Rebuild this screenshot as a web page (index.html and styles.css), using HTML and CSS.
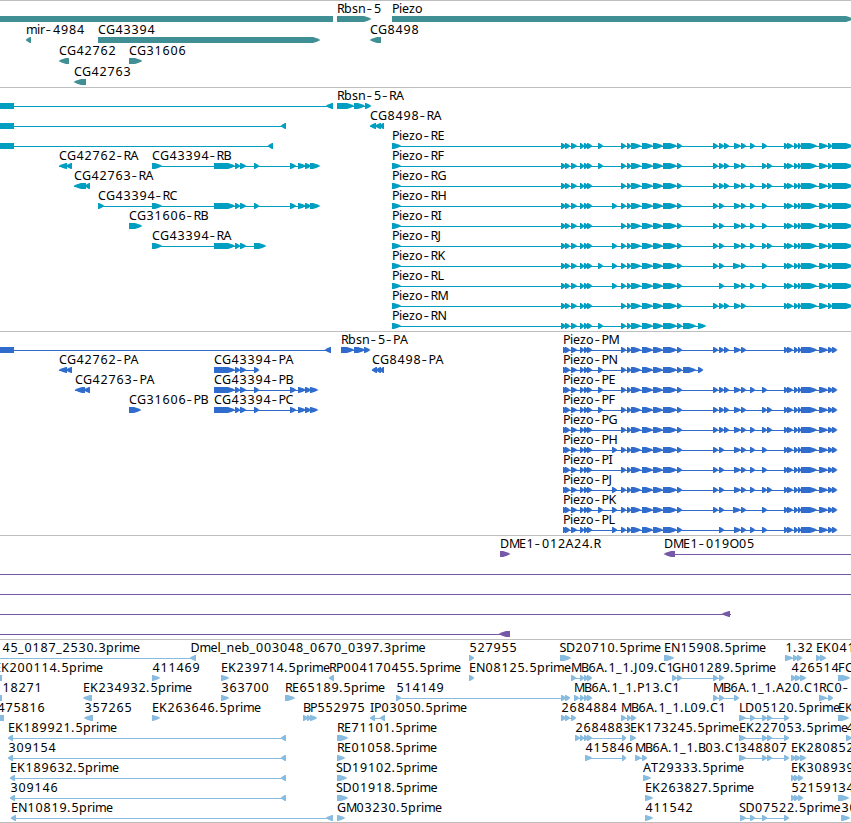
FILE: index.html
```
<!DOCTYPE html>
<html lang="en">
<head>
    <meta charset="UTF-8">
    <meta name="viewport" content="width=device-width, initial-scale=1.0">
    <title>Genome tracks</title>
    <link rel="stylesheet" href="styles.css">
</head>
<body>

    <main class="browser">
        <section class="track track-genes"><svg id="genes"></svg></section>
        <section class="track track-transcripts"><svg id="transcripts"></svg></section>
        <section class="track track-proteins"><svg id="proteins"></svg></section>
        <section class="track track-clones"><svg id="clones"></svg></section>
        <section class="track track-ests"><svg id="ests"></svg></section>
    </main>

    <script src="script.js"></script>
</body>
</html>
```

FILE: styles.css
```
/* Track color scheme */
:root {
    --gene-color: #3f8f94;
    --transcript-color: #009fc1;
    --protein-color: #306ccc;
    --clone-color: #7658a8;
    --est-color: #87bbdf;
    --border-color: #bebebe;
}

* {
    margin: 0;
    padding: 0;
    box-sizing: border-box;
}

body {
    background-color: #fff;
    overflow: hidden;
}

.browser {
    display: flex;
    flex-direction: column;
    width: 851px;
    border-bottom: 1px solid var(--border-color);
}

.track {
    border-top: 1px solid var(--border-color);
}

.track svg {
    display: block;
    width: 100%;
    height: 100%;
    overflow: hidden;
}

.track-genes {
    height: 87px;
    color: var(--gene-color);
}

.track-transcripts {
    height: 244px;
    color: var(--transcript-color);
}

.track-proteins {
    height: 204px;
    color: var(--protein-color);
}

.track-clones {
    height: 104px;
    color: var(--clone-color);
}

.track-ests {
    height: 183px;
    color: var(--est-color);
}

.shape {
    fill: currentColor;
}

.label {
    font-family: "Noto Sans", sans-serif;
    font-size: 12.5px;
    fill: #000;
}

/* Wider, thinner hyphen */
.dash {
    font-size: 17px;
    font-weight: 300;
}
```

FILE: script.js
```
const SVG = 'http://www.w3.org/2000/svg';

// Label letters sit on a fixed advance grid
const advances = {
    A: 8, B: 7, C: 8, D: 9, E: 7, F: 7, G: 9, H: 9, I: 4, J: 4, K: 8, L: 6,
    M: 10, N: 9, O: 9, P: 7, R: 7, S: 6.5, T: 7, b: 8, e: 7, i: 3, l: 3, m: 11, n: 8,
    o: 8, p: 8, r: 5, s: 6, z: 6, '.': 4, '_': 6, '-': 7.5
};

// Piezo exons shared by all the isoforms, and the optional ones by letter
const piezoHead = [[571, 577], [580, 584], [584, 588], [587, 592]];
const piezoMid = [[621, 626], [627, 631], [631, 641], [642, 653], [653, 663], [663, 677], [677, 682]];
const piezoTail = [[784, 788], [787, 793], [794, 798], [798, 801], [801, 817], [819, 828]];
const optional = {
    a: [598, 603], b: [612, 617], c: [713, 718], d: [719, 724], e: [724, 729],
    k: [733, 741], m: [734, 741], n: [741, 746], f: [750, 755], g: [762, 767], h: [767, 772]
};

function pick(codes) {
    return codes.split('').map(c => optional[c]);
}

function piezoR(row, name, codes) {
    return [row, 'Piezo-' + name, 392, 1, [[392, 401], [561, 566], [565, 570], ...piezoHead,
        ...piezoMid, ...pick(codes), ...piezoTail, [828, 832], [832, 853]]];
}

function piezoP(row, name, codes) {
    return [row, 'Piezo-' + name, 563, 1, [[563, 567], [565, 570], ...piezoHead,
        ...piezoMid, ...pick(codes), ...piezoTail, [828, 833], [832, 837]]];
}

const mid43394 = [[214, 235], [235, 240], [240, 246], [254, 259]];
const end43394 = [[290, 296], [298, 306], [305, 311], [310, 320]];
const three = [[791, 796], [795, 801], [800, 806]];

// [row, label, label x, direction (1 right, -1 left, 0 box), exons, line]
const tracks = {
    genes: [
        [0, '', 0, 0, [[0, 333]]],
        [0, 'Rbsn-5', 337, 1, [[337, 371]]],
        [0, 'Piezo', 392, 1, [[392, 853]]],
        [1, 'mir-4984', 26, -1, [[26, 31]]],
        [1, 'CG43394', 98, 1, [[98, 320]]],
        [1, 'CG8498', 370, -1, [[370, 381]]],
        [2, 'CG42762', 59, -1, [[59, 69]]],
        [2, 'CG31606', 129, 1, [[129, 142]]],
        [3, 'CG42763', 74, -1, [[74, 86]]]
    ],
    transcripts: [
        [0, '', 0, 0, [[0, 14]], [0, 330]],
        [0, '', 0, -1, [[326, 333]]],
        [0, 'Rbsn-5-RA', 337, 1, [[337, 354], [354, 365], [365, 371]]],
        [1, '', 0, 0, [[0, 14]], [0, 284]],
        [1, '', 0, -1, [[281, 286]]],
        [1, 'CG8498-RA', 370, -1, [[370, 376], [375, 381], [380, 384]]],
        [2, '', 0, 0, [[0, 14]], [0, 271]],
        [2, '', 0, -1, [[268, 273]]],
        [3, 'CG42762-RA', 59, -1, [[59, 67], [66, 72]]],
        [3, 'CG43394-RB', 152, 1, [[152, 162], ...mid43394, ...end43394]],
        [4, 'CG42763-RA', 74, -1, [[74, 86], [85, 90]]],
        [5, 'CG43394-RC', 98, 1, [[98, 104], [152, 162], ...mid43394, ...end43394]],
        [6, 'CG31606-RB', 129, 1, [[129, 142]]],
        [7, 'CG43394-RA', 152, 1, [[152, 162], [214, 235], [235, 240], [240, 246], [254, 266]]],
        piezoR(2, 'RE', 'acdemnfg'),
        piezoR(3, 'RF', 'acdemngh'),
        piezoR(4, 'RG', 'cdemnfgh'),
        piezoR(5, 'RH', 'bcdmnfg'),
        piezoR(6, 'RI', 'cdmnfg'),
        piezoR(7, 'RJ', 'bcdmnfgh'),
        piezoR(8, 'RK', 'abcdkng'),
        piezoR(9, 'RL', 'bdmnfg'),
        piezoR(10, 'RM', 'cdemn'),
        [11, 'Piezo-RN', 392, 1, [[392, 401], [561, 566], [565, 570], ...piezoHead,
            ...piezoMid, ...pick('a'), [683, 696], [698, 706]]]
    ],
    proteins: [
        [0, '', 0, 0, [[0, 14]], [0, 328]],
        [0, '', 0, -1, [[325, 331]]],
        [0, 'Rbsn-5-PA', 341, 1, [[341, 354], [354, 365], [364, 370]]],
        [1, 'CG42762-PA', 59, -1, [[59, 67], [66, 72]]],
        [1, 'CG43394-PA', 214, 1, mid43394],
        [1, 'CG8498-PA', 372, -1, [[372, 377], [376, 381], [380, 384]]],
        [2, 'CG42763-PA', 75, -1, [[75, 85], [84, 90]]],
        [2, 'CG43394-PB', 214, 1, [...mid43394, ...end43394.slice(0, 3), [310, 318]]],
        [3, 'CG31606-PB', 129, 1, [[129, 141]]],
        [3, 'CG43394-PC', 214, 1, [...mid43394, ...end43394.slice(0, 3), [310, 318]]],
        piezoP(0, 'PM', 'cdemn'),
        [1, 'Piezo-PN', 563, 1, [[563, 567], [565, 570], ...piezoHead,
            ...piezoMid, ...pick('a'), [683, 696], [698, 703]]],
        piezoP(2, 'PE', 'acdemnfg'),
        piezoP(3, 'PF', 'acdemngh'),
        piezoP(4, 'PG', 'cdemnfgh'),
        piezoP(5, 'PH', 'bcdmnfg'),
        piezoP(6, 'PI', 'cdmnfg'),
        piezoP(7, 'PJ', 'bcdmnfgh'),
        piezoP(8, 'PK', 'abcdkng'),
        piezoP(9, 'PL', 'bdmnfg')
    ],
    clones: [
        [0, 'DME1-012A24.R', 500, 1, [[500, 510]]],
        [0, 'DME1-019O05', 664, -1, [[664, 675]], [670, 851]],
        [1, '', 0, 0, [], [0, 851]],
        [2, '', 0, 0, [], [0, 851]],
        [3, '', 0, -1, [[722, 730]], [0, 731]],
        [4, '', 0, -1, [[499, 510]], [0, 505]]
    ],
    ests: [
        [0, '45_0187_2530.3prime', 2, -1, [[190, 196]], [0, 194]],
        [0, 'Dmel_neb_003048_0670_0397.3prime', 190.5, 1, []],
        [0, '527955', 469, 1, [[469, 474]]],
        [0, 'SD20710.5prime', 559.5, 1, [[560, 571]]],
        [0, 'EN15908.5prime', 664, 1, [[664, 674]]],
        [0, '1.32', 785, 1, [[785, 793], [793, 798], [797, 802]]],
        [0, 'EK041', 816, 1, [[816, 821], [820, 826]]],
        [1, 'EK200114.5prime', -6, 0, [[0, 2]]],
        [1, '411469', 152, 1, [[152, 160]]],
        [1, 'EK239714.5prime', 221, 1, [[221, 229]]],
        [1, 'RP004170455.5prime', 329, -1, [[329, 334]]],
        [1, 'EN08125.5prime', 469, 1, [[469, 474]]],
        [1, 'MB6A.1_1.J09.C1', 571, 1, [[571, 576], [580, 584], [584, 588], [587, 592]]],
        [1, 'GH01289.5prime', 672, 1, [[672, 677], [677, 682], [713, 718], [719, 724]]],
        [1, '426514', 791, 1, three],
        [1, 'FC', 838, 1, [[838, 850]]],
        [2, '18271', 2, 0, [[0, 2]]],
        [2, 'EK234932.5prime', 83, -1, [[83, 92]]],
        [2, '363700', 221, 1, [[221, 229]]],
        [2, 'RE65189.5prime', 285, 1, [[285, 295]]],
        [2, '514149', 396, 1, [[396, 401], [561, 566], [565, 570]]],
        [2, 'MB6A.1_1.P13.C1', 574, 1, [[574, 579], [580, 584], [584, 588], [587, 592]]],
        [2, 'MB6A.1_1.A20.C1', 713, 1, [[713, 718], [719, 724], [734, 739]]],
        [2, 'RC0-', 819, 1, [[819, 827], [828, 833]]],
        [3, '475816', -3, 0, [[0, 4]]],
        [3, '357265', 84, -1, [[84, 93]]],
        [3, 'EK263646.5prime', 152, 1, [[152, 160]]],
        [3, 'BP552975', 303, 1, [[303, 308], [307, 311], [310, 317]]],
        [3, 'IP03050.5prime', 370, -1, [[370, 375], [380, 385]]],
        [3, '2684884', 561, 1, [[561, 566], [565, 570], [571, 576]]],
        [3, 'MB6A.1_1.L09.C1', 621, 1, [[621, 626], [627, 631], [631, 636]]],
        [3, 'LD05120.5prime', 739, 1, [[739, 746], [750, 755], [762, 767], [767, 772], [784, 789]]],
        [3, 'EK', 838, 1, [[838, 849]]],
        [4, 'EK189921.5prime', 8, -1, [[8, 13], [281, 286]]],
        [4, 'RE71101.5prime', 337, 1, [[337, 348]]],
        [4, '2684883', 575, 1, [[575, 580], [580, 584], [584, 588], [587, 592], [622, 626]]],
        [4, 'EK173245.5prime', 630, 1, [[630, 636]]],
        [4, 'EK227053.5prime', 739, 1, [[739, 746], [762, 767], [767, 772], [784, 789]]],
        [4, '4', 846, 1, [[846, 852]]],
        [5, '309154', 8, -1, [[8, 13], [281, 286]]],
        [5, 'RE01058.5prime', 337, 1, [[337, 345]]],
        [5, '415846', 585, 1, [[585, 592], [622, 626]]],
        [5, 'MB6A.1_1.B03.C1', 635, 1, [[635, 641], [642, 647]]],
        [5, '348807', 739, 1, [[739, 746], [762, 767], [767, 772], [784, 789]]],
        [5, 'EK280852', 791, 1, three],
        [6, 'EK189632.5prime', 10, -1, [[10, 15], [281, 286]]],
        [6, 'SD19102.5prime', 336, 1, [[337, 347]]],
        [6, 'AT29333.5prime', 643, 1, [[643, 651]]],
        [6, 'EK308939', 791, 1, [[791, 795], [794, 799], [798, 803]]],
        [7, '309146', 10, -1, [[10, 15], [281, 286]]],
        [7, 'SD01918.5prime', 336, 1, [[337, 348]]],
        [7, 'EK263827.5prime', 645, 1, [[645, 653]]],
        [7, '521591', 791, 1, [[791, 795], [794, 799], [798, 803]]],
        [7, '34', 838, 1, [[838, 849]]],
        [8, 'EN10819.5prime', 11, -1, [[11, 16], [326, 333]]],
        [8, 'GM03230.5prime', 337, 1, [[337, 345]]],
        [8, '411542', 645, 1, [[645, 653]]],
        [8, 'SD07522.5prime', 739, 1, [[740, 746], [750, 755], [762, 767], [784, 789]]],
        [8, '30', 841, 1, [[841, 850]]]
    ]
};

function add(svg, tag, attrs) {
    const el = document.createElementNS(SVG, tag);
    for (const name in attrs) el.setAttribute(name, attrs[name]);
    svg.appendChild(el);
    return el;
}

function drawExon(svg, x0, x1, y, dir) {
    if (dir === 0) {
        add(svg, 'rect', { class: 'shape', x: x0, y, width: x1 - x0, height: 6 });
        return;
    }
    const tip = dir === 1 ? x1 : x0;
    const back = dir === 1 ? x0 : x1;
    const head = Math.min(7, x1 - x0 - 1);
    const neck = tip - dir * head;
    // slightly rounded arrow head
    const mid = tip - dir * head * 0.45;
    add(svg, 'polygon', {
        class: 'shape',
        points: `${back},${y} ${neck},${y} ${mid},${y + 1.2} ${tip + dir * 0.5},${y + 3} ${mid},${y + 4.8} ${neck},${y + 6} ${back},${y + 6}`
    });
}

function drawLabel(svg, text, x, y) {
    const el = add(svg, 'text', { class: 'label', y });
    // split on the hyphens, each part keeps its own x list
    text.split(/(-)/).filter(part => part).forEach(part => {
        const dash = part === '-';
        const xs = [];
        for (const c of part) {
            xs.push(/[\d-]/.test(c) ? x + 0.4 : x);
            x += advances[c] || 8;
        }
        add(el, 'tspan', { class: dash ? 'dash' : 'part', x: xs.join(' '), y: dash ? y + 0.8 : y }).textContent = part;
    });
}

for (const id in tracks) {
    const svg = document.getElementById(id);
    const pitch = id === 'genes' ? 21 : 20;
    tracks[id].forEach(([row, label, x, dir, exons, line]) => {
        const y = row * pitch + 15;
        if (!line && exons.length > 1) {
            line = [exons[0][0], Math.max(...exons.map(e => e[1])) - 2];
        }
        if (line) {
            add(svg, 'rect', { class: 'shape', x: line[0], y: y + 3, width: line[1] - line[0], height: 1 });
        }
        exons.forEach(([x0, x1]) => drawExon(svg, x0, x1, y, dir));
        if (label) drawLabel(svg, label, x, y - 3);
    });
}
```
